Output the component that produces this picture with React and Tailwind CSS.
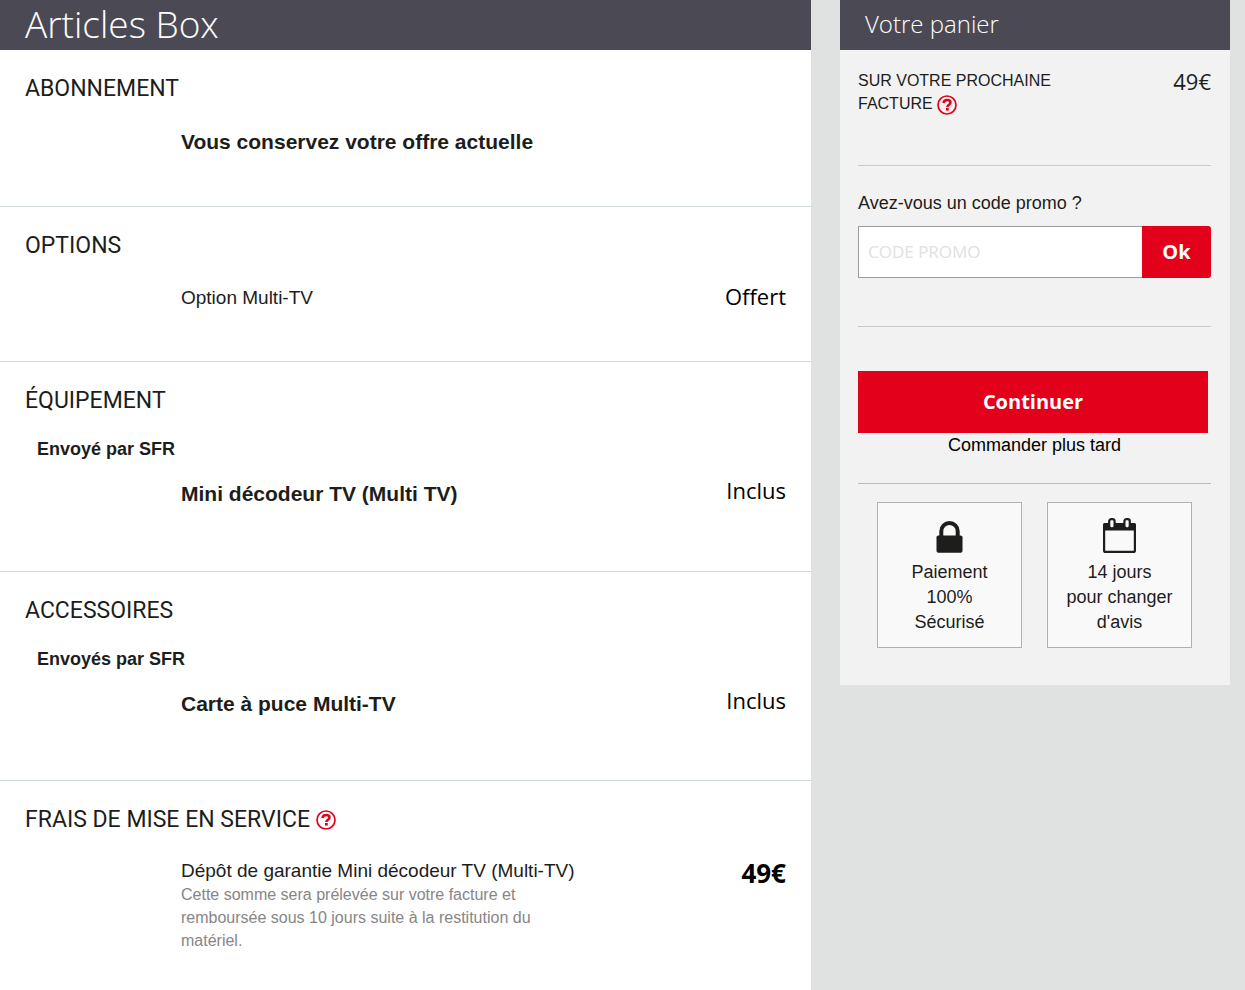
function HelpIcon() {
  return (
    <svg viewBox="0 0 20 20" className="size-5 shrink-0" fill="none" aria-hidden="true">
      <circle cx="10" cy="10" r="9" stroke="#e2001a" strokeWidth="1.7" />
      <path d="M6.6 8C6.8 6 8.2 5 10.1 5c2 0 3.4.9 3.4 2.5 0 2.3-3.1 2.1-3.1 4.4" stroke="#e2001a" strokeWidth="2.5" />
      <rect x="9" y="13" width="2.8" height="2.6" fill="#e2001a" />
    </svg>
  );
}

function HelpButton({ label }) {
  return (
    <button type="button" aria-label={label} className="inline-flex align-middle">
      <HelpIcon />
    </button>
  );
}

function LockIcon() {
  return (
    <svg viewBox="0 0 27 32" className="h-8 w-[27px]" aria-hidden="true">
      <path d="M5.3 16V10.2a8.2 8.2 0 0 1 16.4 0V16" fill="none" stroke="#1d1d1b" strokeWidth="4" />
      <rect x="0.5" y="14.5" width="26" height="17.3" rx="1.8" fill="#1d1d1b" />
    </svg>
  );
}

function CalendarIcon() {
  return (
    <svg viewBox="0 0 33 35" className="h-[35px] w-[33px]" aria-hidden="true">
      <rect x="1.1" y="6.1" width="30.8" height="27.8" rx="1.5" fill="none" stroke="#1d1d1b" strokeWidth="2.2" />
      <path d="M0 7q0-2 2-2h29q2 0 2 2v5.5H0z" fill="#1d1d1b" />
      <rect x="6.2" y="1.1" width="5.4" height="9.2" rx="2.2" fill="#f9f9f9" stroke="#1d1d1b" strokeWidth="2.2" />
      <rect x="21.4" y="1.1" width="5.4" height="9.2" rx="2.2" fill="#f9f9f9" stroke="#1d1d1b" strokeWidth="2.2" />
    </svg>
  );
}

const ui = "font-['Open_Sans',sans-serif]";

function Section({ title, help, sender, className, children }) {
  return (
    <section className={`border-b border-[#d3dadb] pt-[25px] pr-[25px] pl-[25px] last:border-b-0 ${className}`}>
      <h2 className="flex items-center gap-1.5 font-['Roboto',sans-serif] text-[23px] leading-7 text-[#1d1d1b]">
        {title}
        {help && <HelpButton label={help} />}
      </h2>
      {sender && <p className="mt-5 pl-3 text-lg leading-7 font-bold">{sender}</p>}
      {children}
    </section>
  );
}

function Row({ className, children, price, priceClass = "text-[22px] leading-6" }) {
  return (
    <div className={`flex items-start justify-between pl-[156px] ${className}`}>
      <div>{children}</div>
      {price && <p className={`${ui} text-black ${priceClass}`}>{price}</p>}
    </div>
  );
}

function Reassurance({ icon, lines }) {
  return (
    <li className="flex h-[146px] w-[145px] flex-col items-center border border-[#b1b1b1] bg-[#f9f9f9] pt-[15px] text-center text-lg leading-[25px]">
      <span className="flex h-[35px] items-end">{icon}</span>
      <p className="mt-[7px]">
        {lines.map((line) => (
          <span key={line} className="block">{line}</span>
        ))}
      </p>
    </li>
  );
}

export default function App() {
  return (
    <div className="flex min-h-screen items-stretch gap-[29px] bg-[#e0e2e1] pr-[15px] font-['Liberation_Sans',sans-serif] text-[#1d1d1b]">
      <main className="flex-1 bg-white">
        <h1 className={`${ui} h-[50px] bg-[#4b4a54] pl-[25px] text-[37px] leading-[48px] font-light text-white`}>
          Articles Box
        </h1>
        <Section title="ABONNEMENT" className="pb-[50px]">
          <Row className="mt-[25px]">
            <p className="text-[21px] leading-7 font-bold">Vous conservez votre offre actuelle</p>
          </Row>
        </Section>
        <Section title="OPTIONS" className="pb-[49px]">
          <Row className="mt-6" price="Offert">
            <p className="text-[19px] leading-7">Option Multi-TV</p>
          </Row>
        </Section>
        <Section title="ÉQUIPEMENT" sender="Envoyé par SFR" className="pb-[61px]">
          <Row className="mt-[15px]" price="Inclus">
            <p className="text-[21px] leading-8 font-bold">Mini décodeur TV (Multi TV)</p>
          </Row>
        </Section>
        <Section title="ACCESSOIRES" sender="Envoyés par SFR" className="pb-[60px]">
          <Row className="mt-[15px]" price="Inclus">
            <p className="text-[21px] leading-8 font-bold">Carte à puce Multi-TV</p>
          </Row>
        </Section>
        <Section title="FRAIS DE MISE EN SERVICE" help="Aide sur les frais de mise en service" className="pb-8">
          <Row className="mt-[25px]" price="49€" priceClass="text-[26px] leading-7 font-bold">
            <p className="text-[19px] leading-6">Dépôt de garantie Mini décodeur TV (Multi-TV)</p>
            <p className="w-[400px] text-base leading-[23px] text-[#868686]">
              Cette somme sera prélevée sur votre facture et remboursée sous 10 jours suite à la restitution du matériel.
            </p>
          </Row>
        </Section>
      </main>

      <aside className="w-[390px] shrink-0 self-start bg-[#f2f2f2] pb-[37px]">
        <h2 className={`${ui} h-[50px] bg-[#4b4a54] pl-[25px] text-2xl leading-[48px] font-light text-white`}>
          Votre panier
        </h2>
        <div className="pr-[19px] pl-[18px]">
          <div className="flex items-start justify-between border-b border-[#c9cccb] pt-[19px] pb-[50px]">
            <p className="w-[220px] text-base leading-[23px]">
              SUR VOTRE PROCHAINE FACTURE <HelpButton label="Aide sur la prochaine facture" />
            </p>
            <p className={`${ui} text-[22px] leading-6`}>49€</p>
          </div>
          <form className="border-b border-[#c9cccb] pt-[23px] pb-12" onSubmit={(e) => e.preventDefault()}>
            <label htmlFor="promo" className="block text-lg leading-7">Avez-vous un code promo ?</label>
            <div className="mt-[9px] flex h-[52px]">
              <input
                id="promo"
                type="text"
                placeholder="CODE PROMO"
                className={`${ui} min-w-0 flex-1 border border-r-0 border-[#9a9a9a] bg-white px-[9px] text-[17px] placeholder:text-[#e0e2e1]`}
              />
              <button type="submit" className={`${ui} w-[69px] rounded-r-[3px] bg-[#e2001a] text-xl font-bold text-white`}>
                Ok
              </button>
            </div>
          </form>
          <div className="border-b border-[#b9bbba] pt-11 pb-[26px] text-center">
            <button type="button" className={`${ui} block h-[62px] w-[350px] bg-[#e2001a] text-xl font-bold text-white`}>
              Continuer
            </button>
            <a href="#plus-tard" className="block text-lg leading-6 text-black">Commander plus tard</a>
          </div>
          <ul className="mt-[18px] flex justify-center gap-[25px]">
            <Reassurance icon={<LockIcon />} lines={["Paiement", "100%", "Sécurisé"]} />
            <Reassurance icon={<CalendarIcon />} lines={["14 jours", "pour changer", "d'avis"]} />
          </ul>
        </div>
      </aside>
    </div>
  );
}
